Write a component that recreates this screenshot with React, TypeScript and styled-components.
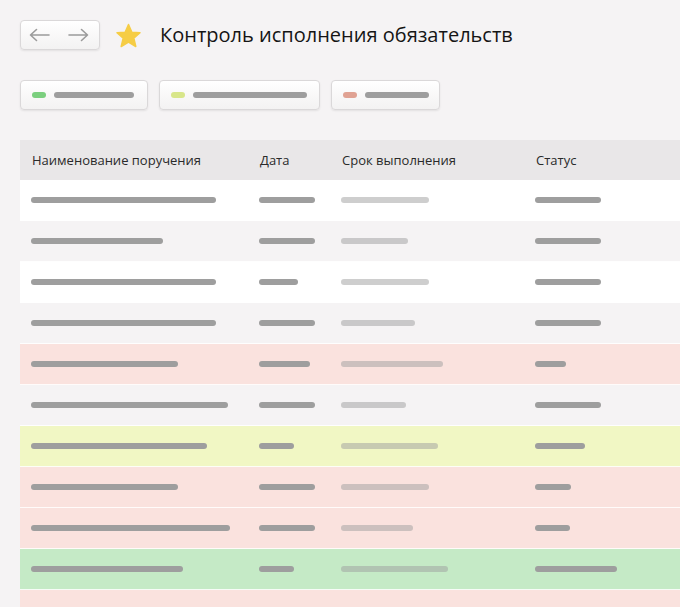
import styled, { createGlobalStyle } from "styled-components";

const GlobalStyle = createGlobalStyle`
	html, body {
		margin: 0;
		padding: 0;
		background: #f5f3f4;
		overflow: hidden;
	}
	body {
		font-family: "Open Sans", "Noto Sans", sans-serif;
		color: #1c1c1c;
	}
`;

type Tone = "white" | "plain" | "red" | "yellow" | "green";

const toneColors: Record<Tone, string> = {
	white: "#ffffff",
	plain: "#f5f3f4",
	red: "#fae2de",
	yellow: "#f1f7c4",
	green: "#c5eac6",
};

const Page = styled.div`
	padding: 20px 0 0 20px;
	display: flex;
	flex-direction: column;
`;

const TopBar = styled.div`
	display: flex;
	align-items: center;
	height: 30px;
`;

const NavGroup = styled.div`
	width: 80px;
	height: 30px;
	box-sizing: border-box;
	display: flex;
	align-items: center;
	justify-content: space-between;
	padding: 0 10px 0 8px;
	background: linear-gradient(#ffffff, #f3f2f2);
	border: 1px solid #dad8d9;
	border-radius: 4px;
	box-shadow: 0 1px 2px rgba(0, 0, 0, 0.08);
`;

const NavButton = styled.button`
	background: none;
	border: none;
	padding: 0;
	display: flex;
	align-items: center;
	justify-content: center;
	cursor: pointer;
`;

const Star = styled.svg`
	margin-left: 15px;
	margin-top: 1px;
`;

const Title = styled.h1`
	margin: 0 0 0 18px;
	font-size: 20px;
	font-weight: 400;
	color: #151515;
	line-height: 30px;
`;

const Filters = styled.div`
	display: flex;
	gap: 11px;
	margin-top: 30px;
`;

const FilterButton = styled.button<{ $w: number }>`
	width: ${({ $w }) => $w}px;
	height: 30px;
	box-sizing: border-box;
	display: flex;
	align-items: center;
	gap: 8px;
	padding: 0 0 0 11px;
	background: linear-gradient(#ffffff, #f3f2f2);
	border: 1px solid #dad8d9;
	border-radius: 4px;
	box-shadow: 0 1px 2px rgba(0, 0, 0, 0.08);
	cursor: pointer;
`;

const Dot = styled.span<{ $color: string }>`
	width: 14px;
	height: 6px;
	border-radius: 3px;
	background: ${({ $color }) => $color};
`;

const Bar = styled.span<{ $w: number; $light?: boolean }>`
	display: block;
	width: ${({ $w }) => $w}px;
	height: 6px;
	border-radius: 3px;
	background: #9e9e9e;
	opacity: ${({ $light }) => ($light ? 0.5 : 1)};
`;

const Table = styled.div`
	margin-top: 30px;
	display: flex;
	flex-direction: column;
`;

const grid = `
	display: grid;
	grid-template-columns: 228px 82px 194px 1fr;
	align-items: center;
	padding-left: 11px;
	box-sizing: border-box;
`;

const HeadRow = styled.div`
	${grid}
	height: 40px;
	background: #e9e7e8;
`;

const HeadCell = styled.div`
	font-size: 13px;
	color: #2a2a2a;
	padding-left: 1px;
	white-space: nowrap;
`;

const Row = styled.div<{ $tone: Tone }>`
	${grid}
	height: 41px;
	border-bottom: 1px solid rgba(255, 255, 255, 0.85);
	background: ${({ $tone }) => toneColors[$tone]};
`;

const rows: { tone: Tone; w: [number, number, number, number] }[] = [
	{ tone: "white", w: [185, 56, 88, 66] },
	{ tone: "plain", w: [132, 56, 67, 66] },
	{ tone: "white", w: [185, 39, 88, 66] },
	{ tone: "plain", w: [185, 56, 74, 66] },
	{ tone: "red", w: [147, 51, 102, 31] },
	{ tone: "plain", w: [197, 56, 65, 66] },
	{ tone: "yellow", w: [176, 35, 97, 50] },
	{ tone: "red", w: [147, 56, 88, 36] },
	{ tone: "red", w: [199, 56, 72, 35] },
	{ tone: "green", w: [152, 35, 107, 82] },
	{ tone: "red", w: [170, 56, 80, 50] },
];

const Arrow = ({ dir }: { dir: "left" | "right" }) => (
	<svg width="21" height="14" viewBox="0 0 21 14">
		{dir === "left" ? (
			<path d="M20 7 H1.5 M7.5 1.5 L1.5 7 L7.5 12.5" fill="none" stroke="#9b9b9b" strokeWidth="1.6" strokeLinecap="round" strokeLinejoin="round" />
		) : (
			<path d="M1 7 H19.5 M13.5 1.5 L19.5 7 L13.5 12.5" fill="none" stroke="#9b9b9b" strokeWidth="1.6" strokeLinecap="round" strokeLinejoin="round" />
		)}
	</svg>
);

export default function App() {
	return (
		<>
			<GlobalStyle />
			<Page>
				<TopBar>
					<NavGroup>
						<NavButton aria-label="Назад">
							<Arrow dir="left" />
						</NavButton>
						<NavButton aria-label="Вперёд">
							<Arrow dir="right" />
						</NavButton>
					</NavGroup>
					<Star width="27" height="26" viewBox="0 0 27 26">
						<polygon
							points="13.5,1.5 16.9,9.2 25,9.8 18.8,15.1 20.8,23.5 13.5,19 6.2,23.5 8.2,15.1 2,9.8 10.1,9.2"
							fill="#f6cd45"
							stroke="#f6cd45"
							strokeWidth="1.5"
							strokeLinejoin="round"
						/>
					</Star>
					<Title>Контроль исполнения обязательств</Title>
				</TopBar>

				<Filters>
					<FilterButton $w={128}>
						<Dot $color="#7bcf7e" />
						<Bar $w={80} />
					</FilterButton>
					<FilterButton $w={161}>
						<Dot $color="#d8e68a" />
						<Bar $w={114} />
					</FilterButton>
					<FilterButton $w={109}>
						<Dot $color="#e0a293" />
						<Bar $w={64} />
					</FilterButton>
				</Filters>

				<Table>
					<HeadRow>
						<HeadCell>Наименование поручения</HeadCell>
						<HeadCell>Дата</HeadCell>
						<HeadCell>Срок выполнения</HeadCell>
						<HeadCell>Статус</HeadCell>
					</HeadRow>
					{rows.map((r, i) => (
						<Row key={i} $tone={r.tone}>
							<Bar $w={r.w[0]} />
							<Bar $w={r.w[1]} />
							<Bar $w={r.w[2]} $light />
							<Bar $w={r.w[3]} />
						</Row>
					))}
				</Table>
			</Page>
		</>
	);
}
